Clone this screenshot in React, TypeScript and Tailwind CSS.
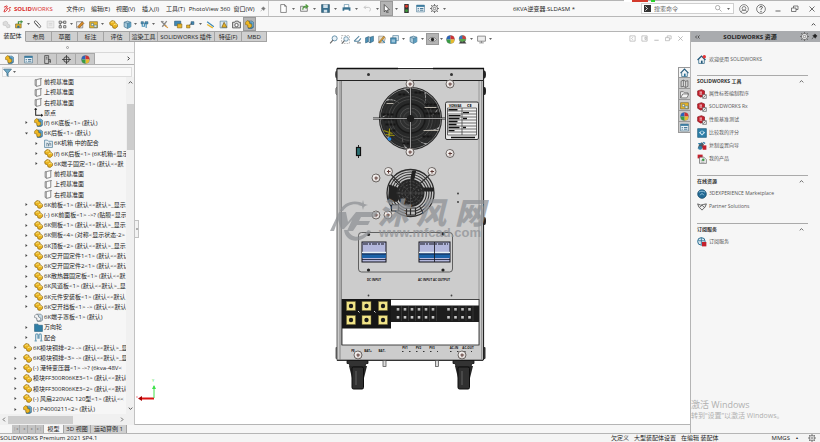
import React from 'react'
import type { ReactNode } from 'react'
import clsx from 'clsx'

const icons: Record<string, ReactNode> = {
    part: (
        <>
            <path d="M1 5l4-4 5 1 1 3 4 3v4l-4 3-4-1-1-4-4-1z" fill="#e9b21c" stroke="#8a6510" strokeWidth="1.2" />
            <path d="M4 5l3-2 2 1M8 9l3-2 3 2" stroke="#fff0a0" strokeWidth="1.5" fill="none" />
        </>
    ),
    asm: (
        <>
            <path d="M5 2h7l3 2v9l-3 2H6z" fill="#3f88b5" stroke="#25526f" />
            <path d="M1 4l3-3 4 2v3l4 2v4l-4 2-3-1V9L1 8z" fill="#efb722" stroke="#8a6510" />
            <path d="M9 3l5 1v8" stroke="#a9d3ea" fill="none" />
        </>
    ),
    ghost: (
        <>
            <path d="M5 2h7l3 3v8l-3 2H6z" fill="#c5dbe8" stroke="#56616a" />
            <path d="M1 5l3-3 4 2v3l4 2v4l-4 1-3-1V9L1 8z" fill="#f4f4f4" stroke="#56616a" />
        </>
    ),
    plane: <path d="M4 3l8-2v12l-8 2zM4 3H2v10h2M12 1h2" fill="#fafafa" stroke="#666" strokeWidth="1.3" />,
    origin: <path d="M3 1v12h12M1 3l2-2 2 2M13 11l2 2-2 2" fill="none" stroke="#222" strokeWidth="1.8" />,
    mateFolder: (
        <>
            <path d="M1 2h5l2 2h7v11H1z" fill="#e7eff4" stroke="#50809b" strokeWidth="1.3" />
            <path d="M5 13V7l3 2v4M9 12V7l3 1v4" fill="none" stroke="#4d6c7e" strokeWidth="1.2" />
        </>
    ),
    folder: <path d="M1 2h6l1 2h7v11H1z" fill="#2f7ea6" stroke="#1d5674" />,
    mates: <path d="M3 14V4c0-3 4-3 4 0v6M9 10V4c0-3 4-3 4 0v10M1 14h4M11 14h4" fill="none" stroke="#6f9fb9" strokeWidth="2.2" />,
    list: (
        <>
            <path d="M1 2h14v12H1z" fill="#eaf2f7" stroke="#3a6d8b" />
            <path d="M1 2h14v3H1z" fill="#2d7298" />
            <path d="M3 8h2M3 11h2M7 8h6M7 11h6" stroke="#2d6384" strokeWidth="1.5" />
        </>
    ),
    config: <path d="M3 1h7v14H3zM5 4h3M5 7h3M9 8h4v6M11 11h3" fill="none" stroke="#444" strokeWidth="1.4" />,
    target: (
        <>
            <circle cx="8" cy="8" r="5" fill="none" stroke="#333" strokeWidth="1.6" />
            <path d="M8 0v16M0 8h16" stroke="#333" strokeWidth="1.4" />
        </>
    ),
    ball: (
        <>
            <circle cx="8" cy="8" r="7" fill="#e7e7e7" stroke="#555" />
            <path d="M8 8V1a7 7 0 0 0-7 7z" fill="#2c63b8" />
            <path d="M8 8V1a7 7 0 0 1 7 7z" fill="#cf3333" />
            <path d="M8 8h7a7 7 0 0 1-7 7z" fill="#e8bb2c" />
            <path d="M8 8v7a7 7 0 0 1-7-7z" fill="#3a9b45" />
        </>
    ),
    scene: (
        <>
            <circle cx="8" cy="7" r="6" fill="#58a84c" stroke="#777" />
            <path d="M8 7V1a6 6 0 0 0-6 6z" fill="#3a74c0" />
            <path d="M8 7V1a6 6 0 0 1 6 6z" fill="#cd4040" />
            <path d="M1 15l4-4 3 2 3-3 4 5z" fill="#444" />
        </>
    ),
    home: (
        <>
            <path d="M3 8v7h10V8" fill="#f3f6f8" stroke="#3a6d8b" strokeWidth="1.4" />
            <path d="M1 9l7-7 7 7" fill="none" stroke="#235a7b" strokeWidth="2" />
            <path d="M7 10h3v5H7z" fill="#2d7298" />
        </>
    ),
    welcome: (
        <>
            <path d="M3 8v7h10V8" fill="#f3f6f8" stroke="#3a6d8b" strokeWidth="1.4" />
            <path d="M1 9l7-7 7 7" fill="none" stroke="#235a7b" strokeWidth="2.4" />
            <path d="M7 10h3v5H7z" fill="#235a7b" />
            <circle cx="13" cy="3" r="3" fill="#e53535" />
        </>
    ),
    library: <path d="M2 4l4-2 4 2 4-1v10l-4 2-4-2-4 1zM6 2v11M10 4v11" fill="#ddd" stroke="#555" strokeWidth="1.3" />,
    openFolder: <path d="M1 14V3h5l2 2h6v3M1 14l4-7h11l-4 7z" fill="#f4f4f4" stroke="#666" strokeWidth="1.4" />,
    palette: (
        <>
            <path d="M1 3h14v11H1z" fill="#e8b62b" stroke="#6b5a24" />
            <path d="M4 6h4v4H4zM9 9h5v4H9z" fill="#f7f1da" stroke="#3a6d8b" />
        </>
    ),
    red: (
        <>
            <path d="M1 3l6-2 5 2v8l-6 2-5-3z" fill="#c4202c" stroke="#7d1018" />
            <path d="M4 5h4M4 8h4" stroke="#fff" strokeWidth="1.4" />
            <path d="M9 9h6v6H9z" fill="#eee" stroke="#555" />
            <path d="M10 14l4-4" stroke="#444" />
        </>
    ),
    compare: (
        <>
            <path d="M1 1h14v14H1z" fill="#2e7fa8" stroke="#1c5879" />
            <path d="M3 7l5-3 5 3-5 5z" fill="#d7ebf5" />
            <circle cx="8" cy="7" r="2" fill="#2e7fa8" />
        </>
    ),
    copy: (
        <>
            <path d="M1 12l3-8 4-2 3 3-2 7z" fill="#4c5a64" />
            <path d="M9 7h6v7H9z" fill="#c4202c" />
            <path d="M2 4h5M10 2l3 2" stroke="#2e7fa8" strokeWidth="2" />
            <circle cx="5" cy="11" r="3" fill="#2e7fa8" />
        </>
    ),
    product: (
        <>
            <path d="M1 1h8v6H1z" fill="#c4202c" />
            <path d="M4 5h7l4 4v6H4z" fill="#f2f2f2" stroke="#555" />
            <path d="M6 10h6M6 13h6" stroke="#777" />
            <circle cx="10" cy="9" r="2" fill="#3a9b45" />
        </>
    ),
    globe: (
        <>
            <circle cx="8" cy="8" r="7" fill="#236a94" stroke="#164763" />
            <path d="M3 5c3-2 7-2 10 0M5 10l3-3 3 3" stroke="#9fcbe2" strokeWidth="1.5" fill="none" />
        </>
    ),
    handshake: <path d="M1 3l5 2 4-1 5-1-2 5-5 5-5-5zM5 8l3-3 4 4" fill="#eee" stroke="#555" strokeWidth="1.4" />,
    subscribe: (
        <>
            <circle cx="7" cy="7" r="6" fill="#d8e8f0" stroke="#2e6f93" strokeWidth="1.6" />
            <path d="M2 6h10M7 1v11" stroke="#2e6f93" strokeWidth="1.3" />
            <path d="M8 8h7v7H8z" fill="#c4202c" />
        </>
    ),
    clip: <path d="M3 5l7 8c2 2 5-1 3-3L6 2C4 0 1 3 3 5l6 6" fill="none" stroke="#555" strokeWidth="1.6" />,
    dim: <path d="M2 4l5-2 3 2v3l4 2v4l-5 1-2-4-5-1z" fill="#dcdcdc" stroke="#bdbdbd" />,
    dimBox: <path d="M2 2h12v12H2zM5 6h6M5 9h6" fill="#ececec" stroke="#c6c6c6" />,
    insert: (
        <>
            <path d="M1 7h10v7H1z" fill="#e8b62b" stroke="#5f5020" />
            <path d="M6 7V3h8M11 1v5" stroke="#3a8b3d" strokeWidth="2" fill="none" />
            <path d="M4 10h4v4H4z" fill="#2e6f93" />
        </>
    ),
    pattern: <path d="M2 2h4v4H2zM10 2h4v4h-4zM2 10h4v4H2zM10 10h4v4h-4zM4 6v4M6 4h4" fill="#e8e8e8" stroke="#555" strokeWidth="1.4" />,
    move: (
        <>
            <path d="M1 3h11v11H1z" fill="#eee" stroke="#555" />
            <path d="M3 12l8-9 3 3-8 8z" fill="#d98b26" stroke="#7a4a10" />
        </>
    ),
    cube: (
        <>
            <path d="M2 4l6-2 6 2v8l-6 3-6-3z" fill="#a9cadb" stroke="#3a6d8b" strokeWidth="1.2" />
            <path d="M8 6l6-2v8l-6 3z" fill="#5b9cbd" />
            <path d="M2 4l6 2 6-2M8 6v9" fill="none" stroke="#3a6d8b" />
        </>
    ),
    section: (
        <>
            <path d="M1 5l5-2v9l-5 2zM9 4l6-2v9l-6 3z" fill="#4b92b8" stroke="#2c5b77" />
            <path d="M6 3l3 1v10l-3-2z" fill="#d5e5ee" stroke="#2c5b77" />
        </>
    ),
    hole: (
        <>
            <path d="M2 3h4v4H2zM9 3h5v4H9z" fill="#4b92b8" stroke="#2c5b77" />
            <path d="M4 7v4h4V5M11 7v7" stroke="#4b92b8" strokeWidth="2" fill="none" />
        </>
    ),
    tools: (
        <>
            <path d="M2 2l9 9M12 2L4 12M3 5l3-3" stroke="#888" strokeWidth="2.4" fill="none" />
            <path d="M8 9l6 5" stroke="#d9963a" strokeWidth="2" />
        </>
    ),
    box: (
        <>
            <path d="M1 2h11v8H1z" fill="#3f88b5" stroke="#25526f" />
            <path d="M6 7h8v7H6z" fill="#e8b62b" stroke="#7c5c12" />
        </>
    ),
    link: (
        <>
            <path d="M1 9h6v5H1z" fill="#e8b62b" stroke="#7c5c12" />
            <path d="M9 3h5v5H9z" fill="#3f88b5" stroke="#25526f" />
            <path d="M6 9l4-3" stroke="#444" strokeWidth="1.5" />
        </>
    ),
    ruler: (
        <>
            <path d="M2 3l12 9" stroke="#3f88b5" strokeWidth="2" />
            <path d="M2 8l10 6" stroke="#e8b62b" strokeWidth="2.4" />
        </>
    ),
    warn: (
        <>
            <path d="M2 2h12v12H2z" fill="#d9e6ee" stroke="#3a6d8b" />
            <path d="M5 13l4-9 5 9z" fill="#e8b62b" stroke="#5c430b" />
        </>
    ),
    camera: (
        <>
            <path d="M1 4h4l1-2h5l1 2h3v10H1z" fill="#ddd" stroke="#444" strokeWidth="1.4" />
            <circle cx="8" cy="9" r="3" fill="#fff" stroke="#444" strokeWidth="1.4" />
        </>
    ),
    page: <path d="M3 1h7l3 3v11H3zM10 1v3h3" fill="#fff" stroke="#666" strokeWidth="1.3" />,
    open: (
        <>
            <path d="M1 13V4h5l1 2h6v7z" fill="#eee" stroke="#666" strokeWidth="1.3" />
            <path d="M5 10c0-5 3-7 8-6M10 1l4 3-4 4" fill="none" stroke="#4d9a3a" strokeWidth="2" />
        </>
    ),
    save: (
        <>
            <path d="M1 1h14v14H1z" fill="#38708f" stroke="#24495e" />
            <path d="M4 1h8v6H4zM5 10h6v5H5z" fill="#cfe0ea" />
        </>
    ),
    print: (
        <>
            <path d="M4 1h8v6H4z" fill="#fff" stroke="#38708f" />
            <path d="M1 6h14v6H1z" fill="#38708f" />
            <path d="M4 10h8v4H4z" fill="#fff" />
        </>
    ),
    undo: <path d="M5 3L2 6l3 3M2 6h8c4 0 4 6 1 7" fill="none" stroke="#c2c2c2" strokeWidth="1.6" />,
    cursor: <path d="M4 1l9 9-4 1 2 4-2 1-2-5-3 3z" fill="#fff" stroke="#333" strokeWidth="1.3" />,
    light: (
        <>
            <path d="M4 0h8v16H4z" fill="#333" />
            <circle cx="8" cy="4" r="2.6" fill="#dd3a2d" />
            <circle cx="8" cy="12" r="2.6" fill="#3f9b3b" />
        </>
    ),
    gear: (
        <>
            <circle cx="8" cy="8" r="5.5" fill="#f4f4f4" stroke="#666" strokeWidth="1.5" />
            <circle cx="8" cy="8" r="2.2" fill="none" stroke="#666" strokeWidth="1.3" />
            <path d="M8 0v3M8 13v3M0 8h3M13 8h3M2 2l2 2M12 12l2 2M14 2l-2 2M4 12l-2 2" stroke="#666" strokeWidth="1.6" />
        </>
    ),
    user: (
        <>
            <circle cx="8" cy="8" r="7" fill="none" stroke="#666" strokeWidth="1.2" />
            <circle cx="8" cy="7" r="3" fill="none" stroke="#666" strokeWidth="1.2" />
            <path d="M3 13c1-4 9-4 10 0" fill="none" stroke="#666" strokeWidth="1.2" />
        </>
    ),
    help: (
        <>
            <circle cx="8" cy="8" r="7" fill="none" stroke="#555" strokeWidth="1.2" />
            <path d="M6 6c0-3 5-3 4 0 0 1-2 1-2 3M8 11v2" fill="none" stroke="#444" strokeWidth="1.6" />
        </>
    ),
    min: <path d="M3 12h10" stroke="currentColor" strokeWidth="1.8" />,
    restore: <path d="M1 6h9v7H1zM5 6V2h9v7h-4" fill="none" stroke="currentColor" strokeWidth="1.5" />,
    close: <path d="M3 3l10 10M13 3L3 13" stroke="currentColor" strokeWidth="1.7" />,
    dockLeft: <path d="M2 2h12v12H2zM9 5L6 8l3 3" fill="none" stroke="currentColor" strokeWidth="1.5" />,
    dockRight: <path d="M2 2h12v12H2zM9 5h3v5H9z" fill="none" stroke="currentColor" strokeWidth="1.5" />,
    pin: <path d="M9 2l5 5-2 1-2 4-6-6 4-2zM6 9l-4 5" fill="currentColor" stroke="currentColor" strokeWidth="1.2" />,
    zoom: (
        <>
            <circle cx="10" cy="6" r="4.5" fill="#e9f2f8" stroke="#5685a0" strokeWidth="1.5" />
            <path d="M7 9l-5 6" stroke="#666" strokeWidth="2" />
        </>
    ),
    zoomArea: (
        <>
            <path d="M1 1h14v14H1z" fill="none" stroke="#888" strokeDasharray="3 2" />
            <circle cx="9" cy="7" r="4" fill="#e9f2f8" stroke="#5685a0" strokeWidth="1.4" />
            <path d="M6 10l-4 5" stroke="#666" strokeWidth="2" />
        </>
    ),
    prev: (
        <>
            <path d="M2 11l9-9M2 11h8l4-5" fill="none" stroke="#5685a0" strokeWidth="1.8" />
            <path d="M7 14h7" stroke="#777" strokeWidth="2" />
        </>
    ),
    pencil: (
        <>
            <path d="M3 2h9l3 4-3 8H3z" fill="#e6e0d0" stroke="#777" />
            <path d="M3 13L12 2l2 2L5 14z" fill="#e0a63a" stroke="#8a5a16" />
            <path d="M9 9l5 5" stroke="#3f88b5" strokeWidth="2" />
        </>
    ),
    view: (
        <>
            <path d="M5 1h10v9H5z" fill="#dcebf3" stroke="#3a6d8b" />
            <path d="M1 5h10v10H1z" fill="#4b92b8" stroke="#2c5b77" />
            <path d="M3 8h6v5H3z" fill="#9cc5da" />
        </>
    ),
    eye: (
        <>
            <path d="M1 8c4-5 10-5 14 0-4 5-10 5-14 0z" fill="#e4e4e4" stroke="#555" />
            <circle cx="8" cy="8" r="3" fill="#222" />
        </>
    ),
    monitor: <path d="M1 2h14v9H1zM8 11v3M4 14h8" fill="#ededed" stroke="#777" strokeWidth="1.4" />,
    funnel: <path d="M1 2h14L9 9v6l-2-2V9z" fill="#6ea9c6" stroke="#2f607c" strokeWidth="1.2" />,
    prompt: (
        <>
            <path d="M0 0h16v16H0z" fill="#333" />
            <path d="M3 3l5 5-5 5" stroke="#eee" strokeWidth="2" fill="none" />
        </>
    ),
    search: <path d="M10 10l5 5M11 6A5 5 0 1 1 1 6a5 5 0 0 1 10 0z" fill="none" stroke="#888" strokeWidth="1.5" />,
}

const Icon = ({ name, className = 'size-2' }: { name: string; className?: string }) => (
    <svg viewBox="0 0 16 16" className={clsx('shrink-0', className)} aria-hidden="true">
        {icons[name]}
    </svg>
)

const Caret = ({ className = 'w-[6px]' }: { className?: string }) => (
    <button aria-label="more" className={clsx('flex h-full shrink-0 items-center justify-center', className)}>
        <svg viewBox="0 0 6 4" className="h-[2px] w-[3px]">
            <path d="M0 0h6L3 4z" fill="#666" />
        </svg>
    </button>
)

interface Tool {
    icon?: string;
    w: string;
    active?: boolean;
}

const Tools = ({ items, size = 'size-[9px]' }: { items: Tool[]; size?: string }) => (
    <>
        {items.map((t, i) =>
            t.icon ? (
                <button
                    key={i}
                    aria-label={t.icon}
                    className={clsx('flex h-full shrink-0 items-center justify-center', t.w, t.active && 'bg-[#b4b4b4] outline-1 -outline-offset-1 outline-[#999]')}
                >
                    <Icon name={t.icon} className={size} />
                </button>
            ) : (
                <Caret key={i} className={t.w} />
            )
        )}
    </>
)

const menus = [
    ['文件(F)', 'w-[25px]'],
    ['编辑(E)', 'w-[25px]'],
    ['视图(V)', 'w-[25px]'],
    ['插入(I)', 'w-[25px]'],
    ['工具(T)', 'w-[25px]'],
    ['PhotoView 360', 'w-[43px]'],
    ['窗口(W)', 'w-[26px]'],
]

const quickTools: Tool[] = [
    { icon: 'page', w: 'w-4' },
    { w: 'w-[5px]' },
    { icon: 'open', w: 'w-4' },
    { w: 'w-[5px]' },
    { icon: 'save', w: 'w-4' },
    { w: 'w-[5px]' },
    { icon: 'print', w: 'w-4' },
    { w: 'w-[5px]' },
    { icon: 'undo', w: 'w-4' },
    { w: 'w-[5px]' },
    { icon: 'cursor', w: 'w-[13px]', active: true },
    { w: 'w-[6px]' },
    { icon: 'light', w: 'w-[14px]' },
    { icon: 'list', w: 'w-[14px]' },
    { icon: 'gear', w: 'w-[14px]' },
    { w: 'w-[6px]' },
]

const commandTools: Tool[] = [
    { icon: 'dim', w: 'w-[13px]' },
    { icon: 'insert', w: 'w-3' },
    { w: 'w-[6px]' },
    { icon: 'clip', w: 'w-[13px]' },
    { icon: 'dimBox', w: 'w-3' },
    { icon: 'pattern', w: 'w-3' },
    { w: 'w-[6px]' },
    { icon: 'move', w: 'w-[13px]' },
    { icon: 'palette', w: 'w-3' },
    { w: 'w-[6px]' },
    { icon: 'part', w: 'w-4' },
    { icon: 'cube', w: 'w-3' },
    { w: 'w-[5px]' },
    { icon: 'hole', w: 'w-3' },
    { w: 'w-[6px]' },
    { icon: 'tools', w: 'w-4' },
    { icon: 'box', w: 'w-3' },
    { icon: 'link', w: 'w-3' },
    { w: 'w-2' },
    { icon: 'ruler', w: 'w-[13px]' },
    { icon: 'warn', w: 'w-[13px]' },
    { icon: 'camera', w: 'w-[13px]' },
    { icon: 'asm', w: 'w-[13px]', active: true },
]

const viewTools: Tool[] = [
    { icon: 'zoom', w: 'w-3' },
    { icon: 'zoomArea', w: 'w-3' },
    { icon: 'prev', w: 'w-3' },
    { icon: 'section', w: 'w-3' },
    { icon: 'pencil', w: 'w-3' },
    { icon: 'view', w: 'w-[13px]' },
    { w: 'w-[6px]' },
    { icon: 'cube', w: 'w-[13px]' },
    { w: 'w-[6px]' },
    { icon: 'eye', w: 'w-[13px]', active: true },
    { w: 'w-[6px]' },
    { icon: 'ball', w: 'w-3' },
    { icon: 'scene', w: 'w-3' },
    { w: 'w-[6px]' },
    { icon: 'monitor', w: 'w-[13px]' },
    { w: 'w-[6px]' },
]

const ribbonTabs = [
    ['装配体', 'w-[26px]'],
    ['布局', 'w-[26px]'],
    ['草图', 'w-[26px]'],
    ['标注', 'w-[26px]'],
    ['评估', 'w-[26px]'],
    ['渲染工具', 'w-[28px]'],
    ['SOLIDWORKS 插件', 'w-[57px]'],
    ['特征(F)', 'w-[27px]'],
    ['MBD', 'w-[25px]'],
]

interface Node {
    level: 1 | 2 | 3;
    icon: string;
    text: string;
    arrow?: 'closed' | 'open';
}

const tree: Node[] = [
    { level: 2, icon: 'plane', text: '前视基准面' },
    { level: 2, icon: 'plane', text: '上视基准面' },
    { level: 2, icon: 'plane', text: '右视基准面' },
    { level: 2, icon: 'origin', text: '原点' },
    { level: 2, icon: 'asm', text: '(f) 6K底板<1> (默认)', arrow: 'closed' },
    { level: 2, icon: 'asm', text: '6K后板<1> (默认)', arrow: 'open' },
    { level: 3, icon: 'mateFolder', text: '6K机箱 中的配合', arrow: 'closed' },
    { level: 3, icon: 'part', text: '(f) 6K后板<1> (6K机箱<显示', arrow: 'closed' },
    { level: 3, icon: 'part', text: '6K端子固定<1> (默认<<默', arrow: 'closed' },
    { level: 3, icon: 'plane', text: '前视基准面' },
    { level: 3, icon: 'plane', text: '上视基准面' },
    { level: 3, icon: 'plane', text: '右视基准面' },
    { level: 2, icon: 'part', text: '6K前板<1> (默认<<默认>_显示', arrow: 'closed' },
    { level: 2, icon: 'part', text: '(-) 6K前面板<1> ->? (贴膜<显示', arrow: 'closed' },
    { level: 2, icon: 'part', text: '6K侧板<1> (默认<<默认>_显示', arrow: 'closed' },
    { level: 2, icon: 'part', text: '6K侧板<4> (对称<显示状态-2>', arrow: 'closed' },
    { level: 2, icon: 'part', text: '6K顶板<2> (默认<<默认>_显示', arrow: 'closed' },
    { level: 2, icon: 'part', text: '6K空开固定件1<1> (默认<<默认', arrow: 'closed' },
    { level: 2, icon: 'part', text: '6K空开固定件2<1> (默认<<默认', arrow: 'closed' },
    { level: 2, icon: 'part', text: '6K散热器固定板<1> (默认<<默', arrow: 'closed' },
    { level: 2, icon: 'part', text: '6K风道板<1> (默认<<默认>_显', arrow: 'closed' },
    { level: 2, icon: 'part', text: '6K元件安装板<1> (默认<<默认', arrow: 'closed' },
    { level: 2, icon: 'part', text: '6K空开挡板<1> -> (默认<<默认', arrow: 'closed' },
    { level: 2, icon: 'ghost', text: '6K端子罩板<1> (默认)' },
    { level: 2, icon: 'folder', text: '万向轮', arrow: 'closed' },
    { level: 2, icon: 'mates', text: '配合', arrow: 'closed' },
    { level: 1, icon: 'part', text: '6K模块铜排<2> -> (默认<<默认>_显', arrow: 'closed' },
    { level: 1, icon: 'part', text: '6K模块铜排<3> -> (默认<<默认>_显', arrow: 'closed' },
    { level: 1, icon: 'part', text: '(-) 港特变压器<1> ->? (6kva-48V<', arrow: 'closed' },
    { level: 1, icon: 'part', text: '模块FF300R06KE3<1> (默认<<默认', arrow: 'closed' },
    { level: 1, icon: 'part', text: '模块FF300R06KE3<2> (默认<<默认', arrow: 'closed' },
    { level: 1, icon: 'part', text: '(-) 风扇220VAC 120型<1> (默认<<', arrow: 'closed' },
    { level: 1, icon: 'asm', text: '(-) P4000211<2> (默认)', arrow: 'closed' },
]

const resources = [
    {
        title: 'SOLIDWORKS 工具',
        items: [
            ['red', '属性标签编制程序'],
            ['red', 'SOLIDWORKS Rx'],
            ['red', '性能基准测试'],
            ['compare', '比较我的评分'],
            ['copy', '复制设置向导'],
            ['product', '我的产品'],
        ],
    },
    {
        title: '在线资源',
        items: [
            ['globe', '3DEXPERIENCE Marketplace'],
            ['handshake', 'Partner Solutions'],
        ],
    },
    { title: '订阅服务', items: [['subscribe', '订阅服务']] },
]

const TitleBar = () => (
    <header className="flex h-[17px] shrink-0 items-stretch border-t border-b border-t-[#b5b5b5] border-b-[#b8b8b8] bg-[#f8f8f8]">
        <div className="flex w-[63px] shrink-0 items-center gap-[2px] pl-[3px] text-[#da2b2b]">
            <svg viewBox="0 0 20 18" className="h-2 w-[9px]" aria-hidden="true">
                <path d="M2 5l6-3c3 0 1 4-2 5 4-1 5 1 3 4s-5 5-7 4l3-7M18 6c-4-1-6 1-4 3s3 4-2 6" fill="none" stroke="#da2b2b" strokeWidth="2.2" />
            </svg>
            <span>
                <b>SOLID</b>WORKS
            </span>
        </div>
        <nav className="flex shrink-0">
            {menus.map(([label, w]) => (
                <button key={label} className={clsx('shrink-0 whitespace-nowrap text-center', w)}>
                    {label}
                </button>
            ))}
        </nav>
        <button aria-label="pin" className="flex w-3 shrink-0 items-center justify-center border-r border-[#d0d0d0] text-[#777]">
            <Icon name="pin" className="size-[6px]" />
        </button>
        <div className="flex shrink-0 pl-[6px]">
            <Tools items={quickTools} />
        </div>
        <h1 className="flex flex-1 items-center justify-center whitespace-nowrap">6KVA逆变器.SLDASM *</h1>
        <label className="my-[2px] flex w-[93px] shrink-0 items-center gap-[3px] border border-[#cfcfcf] bg-white px-[2px]">
            <Icon name="prompt" className="size-[7px]" />
            <input placeholder="搜索命令" className="w-full min-w-0 bg-transparent outline-none placeholder:text-[#666]" />
            <Icon name="search" className="size-[7px]" />
            <Caret />
        </label>
        <div className="flex shrink-0 items-center pl-[1px] text-[#555]">
            {['user', 'help', 'min', 'restore', 'close'].map((n) => (
                <button key={n} aria-label={n} className="flex w-[17px] justify-center">
                    <Icon name={n} className={n === 'user' || n === 'help' ? 'size-[10px]' : 'size-2'} />
                </button>
            ))}
        </div>
    </header>
)

const Ribbon = () => (
    <div className="flex h-[14px] shrink-0 items-stretch bg-[#f7f7f7]">
        <Tools items={commandTools} />
        <button aria-label="collapse" className="ml-auto flex w-[14px] items-center justify-center">
            <svg viewBox="0 0 8 5" className="h-[3px] w-[5px]">
                <path d="M1 4l3-3 3 3" fill="none" stroke="#444" strokeWidth="1.6" />
            </svg>
        </button>
    </div>
)

const TreeRow = ({ node }: { node: Node }) => (
    <li
        className={clsx(
            'flex min-h-0 flex-1 items-center whitespace-nowrap',
            node.level === 1 && 'pl-[13px]',
            node.level === 2 && 'pl-6',
            node.level === 3 && 'pl-[34px]'
        )}
    >
        <span className="flex w-[10px] shrink-0">
            {node.arrow && (
                <svg viewBox="0 0 6 6" className="ml-[1px] size-[3px]" aria-hidden="true">
                    <path d={node.arrow === 'open' ? 'M0 1h6L3 5z' : 'M1 0l4 3-4 3z'} fill="#444" />
                </svg>
            )}
        </span>
        <Icon name={node.icon} className="size-[9px]" />
        <span className="pl-[1px]">{node.text}</span>
    </li>
)

const FeaturePanel = () => (
    <aside className="flex w-[135px] shrink-0 flex-col border-r border-[#c2c2c2] bg-[#f6f6f6]">
        <div className="flex h-[11px] shrink-0 items-center justify-center border-b border-[#d8d8d8]">
            <span className="size-[3px] rounded-full border border-[#999]" />
        </div>
        <div className="flex h-3 shrink-0 items-stretch border-b border-[#b0b0b0]">
            {['asm', 'list', 'config', 'target', 'ball'].map((n, i) => (
                <button
                    key={n}
                    aria-label={n}
                    className={clsx('flex w-[19px] items-center justify-center border-t border-r border-[#a8a8a8]', i > 0 && 'bg-[#cacaca]')}
                >
                    <Icon name={n} className="size-[9px]" />
                </button>
            ))}
            <button aria-label="next" className="ml-auto flex w-3 items-center justify-center">
                <svg viewBox="0 0 5 8" className="h-[5px] w-[3px]">
                    <path d="M1 1l3 3-3 3" fill="none" stroke="#222" strokeWidth="1.5" />
                </svg>
            </button>
        </div>
        <label className="mx-[2px] mt-[2px] flex h-[10px] shrink-0 items-center border border-[#dcdcdc] bg-[#fafafa]">
            <Icon name="funnel" className="size-[9px]" />
            <Caret className="w-1" />
            <input aria-label="filter" className="w-full min-w-0 bg-transparent outline-none" />
        </label>
        <div className="flex min-h-0 flex-1">
            <ul className="flex min-w-0 flex-1 flex-col overflow-hidden">
                {tree.map((node, i) => (
                    <TreeRow key={i} node={node} />
                ))}
            </ul>
            <div className="flex w-2 shrink-0 flex-col items-center bg-[#f0f0f0] py-1">
                <svg viewBox="0 0 8 5" className="h-[3px] w-[5px]">
                    <path d="M1 4l3-3 3 3" fill="none" stroke="#444" strokeWidth="1.5" />
                </svg>
                <div className="mt-5 h-[46px] w-[7px] bg-[#cdcdcd]" />
                <svg viewBox="0 0 8 5" className="mt-auto h-[3px] w-[5px]">
                    <path d="M1 1l3 3 3-3" fill="none" stroke="#444" strokeWidth="1.5" />
                </svg>
            </div>
        </div>
        <div className="flex h-[11px] shrink-0 items-center gap-[2px] bg-[#f0f0f0] pr-[10px] pl-[2px]">
            <svg viewBox="0 0 5 8" className="h-[5px] w-[4px]">
                <path d="M4 1L1 4l3 3" fill="none" stroke="#444" strokeWidth="1.2" />
            </svg>
            <div className="h-2 w-[65px] bg-[#cdcdcd]" />
            <svg viewBox="0 0 5 8" className="ml-auto h-[5px] w-[4px]">
                <path d="M1 1l3 3-3 3" fill="none" stroke="#444" strokeWidth="1.2" />
            </svg>
        </div>
    </aside>
)

const Screw = ({ x, y }: { x: number; y: number }) => (
    <g>
        <circle cx={x} cy={y} r="4" fill="#e0dad8" stroke="#5d5856" strokeWidth="0.9" />
        <circle cx={x - 0.6} cy={y - 0.6} r="2.6" fill="#f1eeec" />
        <path d={`M${x - 1.6} ${y}h3.6M${x} ${y - 1.6}v3.6`} stroke="#5c3b37" />
    </g>
)

const LargeFan = () => (
    <g transform="translate(410.5 118.5)">
        <circle r="31" fill="#a9a9a9" stroke="#2a2a2a" strokeWidth="1.2" />
        {[0, 1, 2, 3, 4, 5, 6, 7, 8].map((i) => (
            <path
                key={i}
                transform={`rotate(${i * 40})`}
                d="M-2 -8C3 -16 2 -24 -5 -29.500A30 30 0 0 1 13 -27C17 -20 14 -12 8 -6z"
                fill="#282929"
            />
        ))}
        {[28, 25, 22, 19].map((r) => (
            <circle key={r} r={r} fill="none" stroke={r > 24 ? '#333' : '#4c4c4c'} strokeWidth="0.8" />
        ))}
        <path d="M-28 -4h11M-27 1h12M-25 6h10M15 -14h11M13 -10h15M15 -5h14M-12 -24h9M4 -26h10M-22 12h8M12 18h9M-8 25h7" stroke="#151515" strokeWidth="2" strokeDasharray="3 1" />
        <path d="M13 12h15M14 -11h12M-24 -15h7" stroke="#b5b0a6" />
        <circle r="14.5" fill="#2e2f2f" stroke="#191919" strokeWidth="1.5" />
        <circle r="10.5" fill="none" stroke="#555" strokeWidth="0.8" />
        <circle r="7" fill="none" stroke="#4c4c4c" strokeWidth="0.8" />
        <path d="M-37.500 0h75M0 -34v68" stroke="#252525" strokeWidth="2.2" />
        <path d="M-37.500 0h75M0 -34v68" stroke="#bcbcbc" strokeWidth="0.8" />
        <circle r="3.6" fill="#1c1c1c" />
        <path d="M-27 12l9 3M-25 16l9 1M-21 10v8" stroke="#9d940d" strokeWidth="1.2" />
        <circle cx="-21" cy="20.500" r="1.8" fill="#2488e8" />
    </g>
)

const SmallFan = () => (
    <g transform="translate(410.5 193)">
        <circle r="23.5" fill="#c4c4c4" stroke="#2c2c2c" strokeWidth="1.3" />
        {[21, 18.5, 16].map((r) => (
            <circle key={r} r={r} fill="none" stroke="#333" strokeWidth="1.1" />
        ))}
        <path d="M-21 -8l8 3v13l-9 1zM-18 -14l8 7M2 -22l3 0-2 10h-3zM12 -5l11 0v3h-11zM-12 12l-8 3M9 13l4 8" fill="#222" stroke="#222" />
        <circle r="14" fill="#262626" />
        {[11.5, 8.5, 5.5].map((r) => (
            <circle key={r} r={r} fill="none" stroke="#6b6b6b" strokeWidth="0.6" strokeDasharray="2 1.5" />
        ))}
        <path d="M-14 0h28M0 -14v28M-10 -10l20 20M10 -10l-20 20" stroke="#585858" strokeWidth="0.5" />
        <path d="M-4 15h9v7h-9zM0 15v7M-4 18h9M-19 12h7v6h-7z" fill="#bbb" stroke="#292929" strokeWidth="1.2" />
        <path d="M-20 -19l10 10M20 -19l-11 10" stroke="#333" strokeWidth="1.3" />
    </g>
)

const Breaker = ({ x, w }: { x: number; w: number }) => (
    <g>
        <rect x={x} y="242" width={w} height="20" fill="#b3b7dc" stroke="#15151d" />
        <path d={`M${x + 1} 244h${w - 3}`} stroke="#15151d" strokeWidth="1.2" strokeDasharray="5 1 2 1" />
        <path d={`M${x} 252.500h${w}`} stroke="#e9f2f5" strokeWidth="1.4" />
        <rect x={x} y="253.5" width={w} height="4.5" fill="#1c62a8" />
        <path d={`M${x} 254h${w}M${x} 259.500h${w}`} stroke="#101830" strokeWidth="0.8" />
    </g>
)

const Caster = ({ x }: { x: number }) => (
    <g>
        <path d={`M${x - 10} 360.500h21v3h-2l-1 3h-15l-1-3h-2z`} fill="#333" stroke="#111" strokeWidth="0.8" />
        <path d={`M${x - 8} 366h18l-3 12h-12z`} fill="#262626" />
        <rect x={x - 5} y="367" width="11.5" height="22" rx="1.5" fill="#303030" stroke="#0c0c0c" />
        <path d={`M${x - 1} 371v14`} stroke="#484848" strokeWidth="2" />
    </g>
)

const Inverter = () => (
    <svg viewBox="329 62 168 332" className="h-[332px] w-[168px]" role="img" aria-label="6KVA">
        <ellipse cx="337" cy="74.5" rx="2" ry="4" fill="#555" />
        <ellipse cx="484" cy="74.5" rx="2" ry="4" fill="#222" />
        <ellipse cx="484.5" cy="91" rx="1.5" ry="4" fill="#222" />
        <ellipse cx="337" cy="91" rx="1.5" ry="4" fill="#aaa" stroke="#555" strokeWidth="0.5" />
        <ellipse cx="484.5" cy="221" rx="1.5" ry="4" fill="#222" />
        <rect x="335.5" y="347" width="3" height="12" rx="1" fill="#666" />
        <rect x="482" y="347" width="3.5" height="12" rx="1" fill="#333" />
        <rect x="337" y="69" width="146.5" height="291" fill="#cccccc" stroke="#444" strokeWidth="0.8" />
        <path d="M340 80v280M341.500 81v264" stroke="#777" strokeWidth="0.8" />
        <path d="M479 81v264M481.500 80v280" stroke="#8a8a8a" strokeWidth="0.8" />
        <path d="M483.500 68v292" stroke="#222" strokeWidth="1.2" />
        <path d="M337 68.500h146.500v12H337z" fill="#cbcbcb" stroke="#222" />
        <path d="M337 68.500h61M433 68.500h51" stroke="#111" strokeWidth="1.6" />
        <path d="M337 360.500h146" stroke="#333" />
        <circle cx="368.5" cy="74.5" r="1.5" fill="#333" />
        <circle cx="451.5" cy="74.5" r="1.5" fill="#333" />

        <LargeFan />
        <SmallFan />
        {[[410, 84], [410, 152], [450, 84], [450, 153.5], [388.5, 171.5], [432, 171.5], [376, 178], [376, 215], [388, 215]].map(([x, y]) => (
            <Screw key={`${x}-${y}`} x={x} y={y} />
        ))}

        <rect x="445.5" y="102" width="33" height="37.5" rx="1.5" fill="#e6e6e6" stroke="#333" />
        <text x="449" y="106.5" fontSize="3" fontWeight="bold">VONVAS</text>
        <text x="467" y="106.5" fontSize="4" fontWeight="bold">CE</text>
        <path d="M447.500 108h29v27h-29zM447.500 111h29M447.500 114h29M447.500 117h29M447.500 120h29M447.500 123h29M447.500 126h29M447.500 129h29M447.500 132h29M462 108v27" fill="#f2f2f2" stroke="#333" strokeWidth="0.7" />
        <path d="M448.500 109.800h9M448.500 115.600h12M448.500 118.500h11M448.500 121.500h9M448.500 124.500h8M448.500 127.500h11M448.500 130.600h6M463 112.600h6M463 118.500h4M463 127.500h3M451 137.500h24" stroke="#111" strokeWidth="1.4" />
        <rect x="356.5" y="147.5" width="4" height="8" fill="#2c7073" stroke="#111" strokeWidth="1.2" />
        <path d="M358.500 145v2M358.500 156v2" stroke="#222" />
        <circle cx="458" cy="193.5" r="0.9" fill="#333" />
        <circle cx="458" cy="202" r="0.9" fill="#333" />

        <rect x="358.5" y="232.5" width="94" height="39.5" rx="3" fill="#cfcfcf" stroke="#444" strokeWidth="0.8" />
        <Breaker x={362} w={24} />
        <Breaker x={419} w={31} />
        <path d="M434.500 242v20" stroke="#15151d" strokeWidth="0.8" />
        {[[368.5, 234.5], [443, 234], [368.5, 270], [443, 270]].map(([x, y]) => (
            <circle key={`${x}-${y}`} cx={x} cy={y} r="1.6" fill="#222" />
        ))}
        <circle cx="368.5" cy="295.5" r="0.9" fill="#444" />
        <circle cx="451.5" cy="295.5" r="0.9" fill="#444" />

        <rect x="342" y="299.5" width="137" height="45.5" fill="#fff" stroke="#333" strokeWidth="0.9" />
        <rect x="342" y="299" width="49" height="29.5" fill="#161616" />
        {[351, 366.5, 383].map((x) =>
            [306, 320].map((y) => (
                <g key={`${x}-${y}`}>
                    <rect x={x - 4.5} y={y - 4.5} width="9" height="9" fill="#f1e488" stroke="#6c6433" strokeWidth="0.5" />
                    <circle cx={x} cy={y} r="2.2" fill="#1b1b1b" />
                </g>
            ))
        )}
        <path d="M358 311l1.500 1.500M374 311l1.500 1.500" stroke="#ddd" />
        <rect x="391" y="305.5" width="88" height="16.5" fill="#1d1d1d" />
        {[398, 405, 412, 419, 426, 433, 448.5, 455.5, 462.5, 469.5].map((x) => (
            <g key={x}>
                <rect x={x - 1.3} y="308" width="2.6" height="2.6" fill="#b9b9b9" />
                <rect x={x - 1.3} y="316" width="2.6" height="2.6" fill="#c9c9c9" />
                <path d={`M${x + 3.5} 306v15`} stroke="#444" strokeWidth="0.6" />
            </g>
        ))}
        <path d="M402 351.500h36M450 351.500h22" stroke="#333" strokeDasharray="1.5 5.5" />
        <rect x="383" y="360.5" width="3" height="6" fill="#ddd" stroke="#444" strokeWidth="0.7" />
        <rect x="435.5" y="360.5" width="3" height="6" fill="#ddd" stroke="#444" strokeWidth="0.7" />
        <Caster x={357} />
        <Caster x={463} />
        <Screw x={358} y={355} />
        <Screw x={462} y={355} />
        <g fontSize="3" fontWeight="bold" fill="#111" textAnchor="middle">
            <text x="374" y="280.5">DC INPUT</text>
            <text x="434" y="280.5">AC INPUT AC OUTPUT</text>
            <text x="353" y="352">PE</text>
            <text x="368" y="352">BAT+</text>
            <text x="382" y="352">BAT-</text>
            <text x="405" y="349">PV1</text>
            <text x="418.5" y="349">PV2</text>
            <text x="432" y="349">PV3</text>
            <text x="454" y="349">AC-IN</text>
            <text x="468" y="349">AC-OUT</text>
        </g>

        <g fill="#8f9296" opacity="0.75">
            <path d="M330 231l9-19h7l2 10 8-10h22l-3 5h-14l-2 4h11l-2 4h-11l-4 6h-6l5-11-8 9h-3l-3-9-4 11z" />
            <path d="M366 205c-10-7-23-3-26 6l3 0c4-7 14-9 21-4zM344 230c2 14 19 14 27 1l-3-1c-6 9-17 9-20 0z" />
            <path d="M363 200l1 4 4 1-4 1-1 4-1-4-4-1 4-1z" />
            <g fontSize="30" fontWeight="900" fontStyle="italic">
                <text x="378" y="224">沐</text>
                <text x="416" y="224">风</text>
                <text x="455" y="224">网</text>
            </g>
            <text x="379" y="237" fontSize="13" fontWeight="bold" className="font-['Liberation_Sans',sans-serif]">www.mfcad.com</text>
        </g>
    </svg>
)

const Viewport = () => (
    <main className="relative flex min-w-0 flex-1 flex-col items-center bg-white">
        <div className="mt-[1px] flex h-3 shrink-0 items-stretch pr-1">
            <Tools items={viewTools} />
        </div>
        <div className="mt-[17px] flex">
            <Inverter />
        </div>
        <div className="absolute top-[3px] right-1 flex text-[#aaa]">
            {['dockLeft', 'dockRight', 'min', 'restore', 'close'].map((n) => (
                <button key={n} aria-label={n} className="flex w-3 justify-center">
                    <Icon name={n} className="size-[7px]" />
                </button>
            ))}
        </div>
        <svg viewBox="0 0 22 26" className="absolute bottom-5 left-[1px] h-[26px] w-[22px]" aria-hidden="true">
            <path d="M5 20.500h13" stroke="#d11" strokeWidth="2" />
            <path d="M2 20.500l4-2.500v5z" fill="#a00" />
            <path d="M18 20v-12" stroke="#3fe04b" />
            <path d="M18 7l-2 4h4z" fill="#3fe04b" />
            <text x="16" y="4" fontSize="4" fill="#3fe04b">Y</text>
            <text x="0" y="20" fontSize="4" fill="#e55">x</text>
        </svg>
        <button aria-label="splitter" className="absolute top-[188px] left-0 flex h-[18px] w-1 items-center justify-center border border-l-0 border-[#c2c2c2] bg-[#f3f3f3]">
            <span className="size-[2px] rounded-full bg-[#999]" />
        </button>
        <div className="absolute top-[35px] right-0 flex flex-col">
            {['home', 'library', 'openFolder', 'palette', 'ball', 'list'].map((n, i) => (
                <button
                    key={n}
                    aria-label={n}
                    className={clsx('flex h-[11px] w-3 items-center justify-center border-b border-l border-[#999]', i === 0 ? 'border-t bg-[#f6f6f6]' : 'bg-[#cbcbcb]')}
                >
                    <Icon name={n} className="size-[9px]" />
                </button>
            ))}
        </div>
    </main>
)

const ResourcePanel = () => (
    <aside className="flex w-[130px] shrink-0 flex-col border-l border-[#b5b5b5] bg-[#f6f6f6] text-[5px] text-[#555]">
        <div className="flex h-[11px] shrink-0 items-center bg-[#a9abae] pr-[2px] pl-1 text-[#222]">
            <svg viewBox="0 0 10 8" className="h-1 w-[5px]">
                <path d="M4 1L1 4l3 3M9 1L6 4l3 3" fill="none" stroke="#222" strokeWidth="1.3" />
            </svg>
            <h2 className="flex-1 text-center text-[6px] font-bold">SOLIDWORKS 资源</h2>
            <Icon name="gear" className="size-[9px]" />
            <Icon name="pin" className="ml-[2px] size-[7px]" />
        </div>
        <a href="#" className="mt-[11px] flex h-3 items-center gap-[3px] pl-[6px]">
            <Icon name="welcome" className="size-[9px]" />
            欢迎使用 SOLIDWORKS
        </a>
        <div className="mt-[10px] flex flex-col gap-[10px] pr-3 pl-[6px]">
            {resources.map((group) => (
                <section key={group.title} className="border-t border-[#aaa]">
                    <h3 className="flex h-[11px] items-center justify-between pr-1 font-bold text-[#333]">
                        {group.title}
                        <svg viewBox="0 0 8 5" className="h-[3px] w-[5px]">
                            <path d="M1 4l3-3 3 3" fill="none" stroke="#444" strokeWidth="1.3" />
                        </svg>
                    </h3>
                    {group.items.map(([icon, label]) => (
                        <a key={label} href="#" className="flex h-[13px] items-center gap-[2px]">
                            <Icon name={icon} className="size-[10px]" />
                            {label}
                        </a>
                    ))}
                </section>
            ))}
        </div>
        <div className="mt-auto mb-3 whitespace-nowrap text-[#b0b0b0]">
            <p className="text-[9px] leading-3">激活 Windows</p>
            <p className="text-[7px] leading-[10px]">转到“设置”以激活 Windows。</p>
        </div>
    </aside>
)

const App = () => (
    <div className="relative flex h-screen flex-col overflow-hidden bg-[#f6f6f6] font-['Open_Sans','Noto_Sans_CJK_SC',sans-serif] text-[6px] leading-none text-[#222]">
        <TitleBar />
        <div className="absolute top-0 right-[164px] flex h-[2px] w-8">
            <span className="w-2 bg-white" />
            <span className="w-4 bg-[#d33a2c]" />
            <span className="ml-[3px] w-1 bg-[#2bd02b]" />
        </div>
        <Ribbon />
        <div className="flex min-h-0 flex-1">
            <div className="flex min-w-0 flex-1 flex-col">
                <div className="flex min-h-0 flex-1">
                    <div className="z-10 flex w-[135px] shrink-0 flex-col">
                        <div className="flex h-[11px] w-[267px] shrink-0 items-stretch">
                            {ribbonTabs.map(([label, w], i) => (
                                <button
                                    key={label}
                                    className={clsx('shrink-0 whitespace-nowrap border-r border-b border-[#a3a3a3]', w, i === 0 ? 'border-b-transparent bg-[#f6f6f6]' : 'border-t bg-[#cfcfcf]')}
                                >
                                    {label}
                                </button>
                            ))}
                        </div>
                        <div className="flex min-h-0 flex-1">
                            <FeaturePanel />
                        </div>
                    </div>
                    <div className="flex min-w-0 flex-1 border-t border-b border-[#b5b5b5]">
                        <Viewport />
                    </div>
                </div>
                <div className="flex h-2 shrink-0 items-stretch pl-3">
                    {['|◂', '◂', '▸', '▸|'].map((s) => (
                        <button key={s} className="w-2 border-r border-[#aaa] bg-[#c4c4c4] text-[4px] text-[#888]">
                            {s}
                        </button>
                    ))}
                    {['模型', '3D 视图', '运动算例 1'].map((s, i) => (
                        <button
                            key={s}
                            className={clsx('whitespace-nowrap border-r border-[#a3a3a3]', i === 0 ? 'w-5' : 'bg-[#cfcfcf]', i === 1 && 'w-[27px]', i === 2 && 'w-9')}
                        >
                            {s}
                        </button>
                    ))}
                </div>
            </div>
            <ResourcePanel />
        </div>
        <footer className="flex h-[9px] shrink-0 items-center border-t border-[#b5b5b5] bg-[#f4f4f4] pr-1">
            <span className="whitespace-nowrap">SOLIDWORKS Premium 2021 SP4.1</span>
            <div className="ml-auto flex items-center gap-[5px] whitespace-nowrap pr-[53px]">
                <span>欠定义</span>
                <span>大型装配体设置</span>
                <span>在编辑 装配体</span>
            </div>
            <span>MMGS</span>
            <span className="pr-[10px] pl-[6px] text-[4px]">▴</span>
            <Icon name="gear" className="size-2" />
        </footer>
    </div>
)

export default App
